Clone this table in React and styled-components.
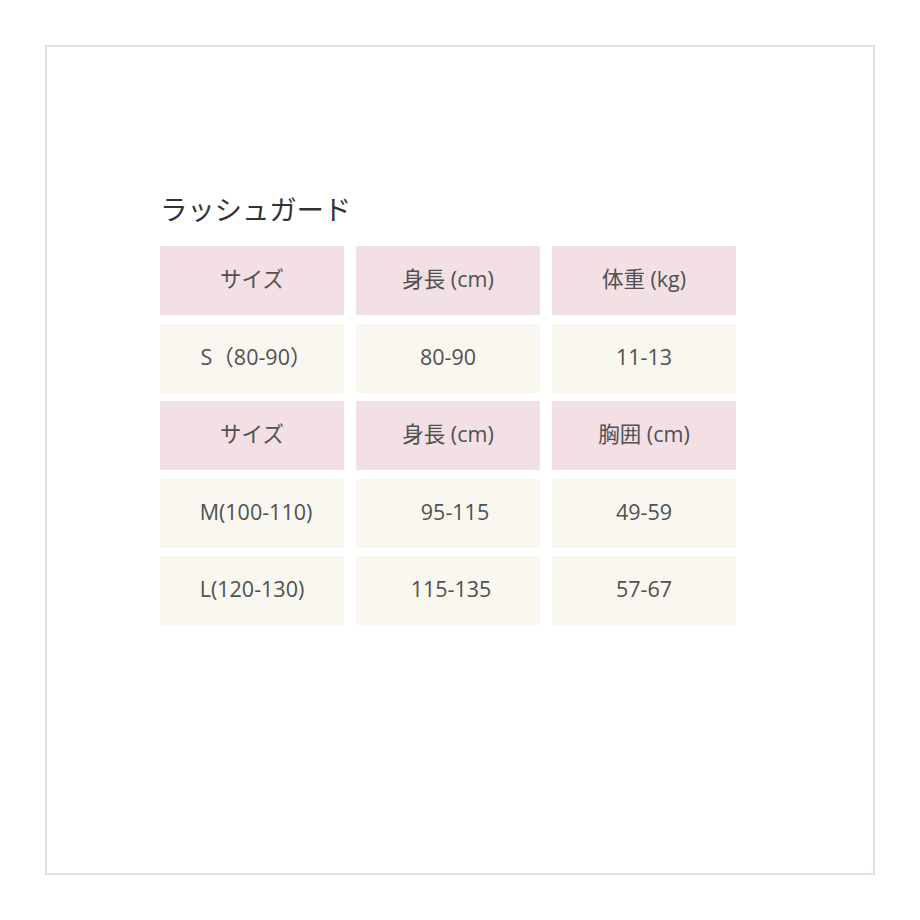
import React from "react";
import styled, { createGlobalStyle } from "styled-components";

const Global = createGlobalStyle`
  html, body { margin: 0; padding: 0; background: #ffffff; }
  body { font-family: "Open Sans", "Noto Sans CJK JP", sans-serif; }
`;

const Frame = styled.div`
  box-sizing: border-box;
  margin: 45px 0 0 45px;
  width: 830px;
  height: 830px;
  border: 2px solid #dde3ee;
  padding: 143px 0 0 113px;
`;

const Title = styled.h2`
  margin: 0 0 20px 0;
  font-family: "Noto Sans CJK JP", sans-serif;
  font-size: 27.5px;
  line-height: 36px;
  font-weight: 400;
  color: #333333;
  letter-spacing: -0.2px;
`;

const Table = styled.div`
  display: grid;
  grid-template-columns: repeat(3, 184px);
  grid-auto-rows: 69px;
  column-gap: 12px;
  row-gap: 8.5px;
`;

const Cell = styled.div`
  box-sizing: border-box;
  display: flex;
  align-items: center;
  justify-content: center;
  background: ${(p) => (p.$head ? "#f2e0e4" : "#f9f7f0")};
  color: #505050;
  font-size: 21.5px;
  line-height: 1;
  padding-left: ${(p) => p.$shift || 0}px;
  padding-bottom: 3px;
`;

const rows = [
  { head: true, cells: ["サイズ", "身長 (cm)", "体重 (kg)"] },
  { head: false, cells: ["S（80-90）", "80-90", "11-13"], shift: [8, 0, 0] },
  { head: true, cells: ["サイズ", "身長 (cm)", "胸囲 (cm)"] },
  { head: false, cells: ["M(100-110)", "95-115", "49-59"], shift: [8, 14, 0] },
  { head: false, cells: ["L(120-130)", "115-135", "57-67"], shift: [0, 6, 0] },
];

export default function App() {
  return (
    <>
      <Global />
      <Frame>
        <Title>ラッシュガード</Title>
        <Table>
          {rows.map((r, i) =>
            r.cells.map((c, j) => (
              <Cell key={`${i}-${j}`} $head={r.head} $shift={r.shift ? r.shift[j] : 0}>
                {c}
              </Cell>
            ))
          )}
        </Table>
      </Frame>
    </>
  );
}
